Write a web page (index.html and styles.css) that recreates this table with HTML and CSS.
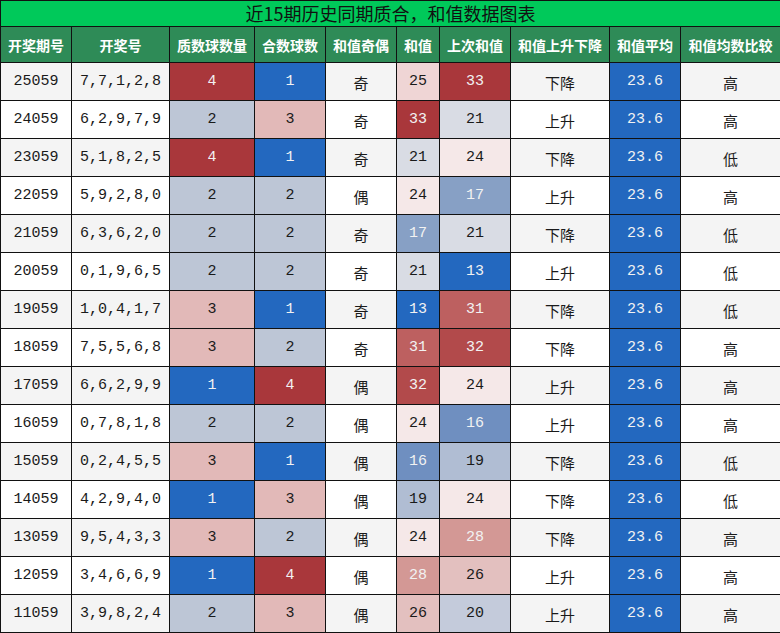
FILE: index.html
```html
<!DOCTYPE html>
<html lang="zh">
<head>
<meta charset="utf-8">
<title>近15期历史同期质合，和值数据图表</title>
<link rel="stylesheet" href="styles.css">
</head>
<body>
<table class="chart">
<colgroup>
<col class="c1"><col class="c2"><col class="c3"><col class="c4"><col class="c5"><col class="c6"><col class="c7"><col class="c8"><col class="c9"><col class="c10">
</colgroup>
<thead>
<tr class="title-row"><th colspan="10" class="title">近15期历史同期质合，和值数据图表</th></tr>
<tr class="head-row"><th>开奖期号</th><th>开奖号</th><th>质数球数量</th><th>合数球数</th><th>和值奇偶</th><th>和值</th><th>上次和值</th><th>和值上升下降</th><th>和值平均</th><th>和值均数比较</th></tr>
</thead>
<tbody>
<tr class="odd"><td>25059</td><td>7,7,1,2,8</td><td class="n4">4</td><td class="n1">1</td><td class="cjk">奇</td><td class="s25">25</td><td class="s33">33</td><td class="cjk">下降</td><td class="avg">23.6</td><td class="cjk">高</td></tr>
<tr class="even"><td>24059</td><td>6,2,9,7,9</td><td class="n2">2</td><td class="n3">3</td><td class="cjk">奇</td><td class="s33">33</td><td class="s21">21</td><td class="cjk">上升</td><td class="avg">23.6</td><td class="cjk">高</td></tr>
<tr class="odd"><td>23059</td><td>5,1,8,2,5</td><td class="n4">4</td><td class="n1">1</td><td class="cjk">奇</td><td class="s21">21</td><td class="s24">24</td><td class="cjk">下降</td><td class="avg">23.6</td><td class="cjk">低</td></tr>
<tr class="even"><td>22059</td><td>5,9,2,8,0</td><td class="n2">2</td><td class="n2">2</td><td class="cjk">偶</td><td class="s24">24</td><td class="s17">17</td><td class="cjk">上升</td><td class="avg">23.6</td><td class="cjk">高</td></tr>
<tr class="odd"><td>21059</td><td>6,3,6,2,0</td><td class="n2">2</td><td class="n2">2</td><td class="cjk">奇</td><td class="s17">17</td><td class="s21">21</td><td class="cjk">下降</td><td class="avg">23.6</td><td class="cjk">低</td></tr>
<tr class="even"><td>20059</td><td>0,1,9,6,5</td><td class="n2">2</td><td class="n2">2</td><td class="cjk">奇</td><td class="s21">21</td><td class="s13">13</td><td class="cjk">上升</td><td class="avg">23.6</td><td class="cjk">低</td></tr>
<tr class="odd"><td>19059</td><td>1,0,4,1,7</td><td class="n3">3</td><td class="n1">1</td><td class="cjk">奇</td><td class="s13">13</td><td class="s31">31</td><td class="cjk">下降</td><td class="avg">23.6</td><td class="cjk">低</td></tr>
<tr class="even"><td>18059</td><td>7,5,5,6,8</td><td class="n3">3</td><td class="n2">2</td><td class="cjk">奇</td><td class="s31">31</td><td class="s32">32</td><td class="cjk">下降</td><td class="avg">23.6</td><td class="cjk">高</td></tr>
<tr class="odd"><td>17059</td><td>6,6,2,9,9</td><td class="n1">1</td><td class="n4">4</td><td class="cjk">偶</td><td class="s32">32</td><td class="s24">24</td><td class="cjk">上升</td><td class="avg">23.6</td><td class="cjk">高</td></tr>
<tr class="even"><td>16059</td><td>0,7,8,1,8</td><td class="n2">2</td><td class="n2">2</td><td class="cjk">偶</td><td class="s24">24</td><td class="s16">16</td><td class="cjk">上升</td><td class="avg">23.6</td><td class="cjk">高</td></tr>
<tr class="odd"><td>15059</td><td>0,2,4,5,5</td><td class="n3">3</td><td class="n1">1</td><td class="cjk">偶</td><td class="s16">16</td><td class="s19">19</td><td class="cjk">下降</td><td class="avg">23.6</td><td class="cjk">低</td></tr>
<tr class="even"><td>14059</td><td>4,2,9,4,0</td><td class="n1">1</td><td class="n3">3</td><td class="cjk">偶</td><td class="s19">19</td><td class="s24">24</td><td class="cjk">下降</td><td class="avg">23.6</td><td class="cjk">低</td></tr>
<tr class="odd"><td>13059</td><td>9,5,4,3,3</td><td class="n3">3</td><td class="n2">2</td><td class="cjk">偶</td><td class="s24">24</td><td class="s28">28</td><td class="cjk">下降</td><td class="avg">23.6</td><td class="cjk">高</td></tr>
<tr class="even"><td>12059</td><td>3,4,6,6,9</td><td class="n1">1</td><td class="n4">4</td><td class="cjk">偶</td><td class="s28">28</td><td class="s26">26</td><td class="cjk">上升</td><td class="avg">23.6</td><td class="cjk">高</td></tr>
<tr class="odd"><td>11059</td><td>3,9,8,2,4</td><td class="n2">2</td><td class="n3">3</td><td class="cjk">偶</td><td class="s26">26</td><td class="s20">20</td><td class="cjk">上升</td><td class="avg">23.6</td><td class="cjk">高</td></tr>
</tbody>
</table>
</body>
</html>
```

FILE: styles.css
```css
html, body {
  margin: 0;
  padding: 0;
  background: #ffffff;
}

.chart {
  width: 780px;
  border-collapse: collapse;
  table-layout: fixed;
  font-family: "Liberation Mono", "Noto Sans CJK SC", monospace;
  font-size: 15px;
  line-height: 18px;
  color: #1a1a1a;
}

.c1 { width: 71px; }
.c2 { width: 98px; }
.c3 { width: 85px; }
.c4 { width: 71px; }
.c5 { width: 71px; }
.c6 { width: 43px; }
.c7 { width: 71px; }
.c8 { width: 99px; }
.c9 { width: 71px; }
.c10 { width: 100px; }

.chart th,
.chart td {
  border: 1px solid #111111;
  padding: 0;
  text-align: center;
  white-space: nowrap;
  overflow: hidden;
}

.title {
  height: 25px;
  background: #00c95a;
  color: #111111;
  font-family: "Noto Sans CJK SC", sans-serif;
  font-size: 18px;
  font-weight: normal;
  line-height: 25px;
}

.head-row th {
  height: 35px;
  background: #2e8b57;
  color: #ffffff;
  font-family: "Noto Sans CJK SC", sans-serif;
  font-size: 14px;
  line-height: 18px;
  font-weight: bold;
}

.chart tbody tr {
  height: 38px;
}

.chart td {
  height: 37px;
  box-sizing: border-box;
}

.odd td { background: #f4f4f4; }
.even td { background: #ffffff; }

.chart td.cjk {
  font-family: "Noto Sans CJK SC", sans-serif;
  padding-top: 3px;
}

/* count colours */
.chart td.n1 { background: #2368bf; color: #f2f2f2; }
.chart td.n2 { background: #bdc6d6; color: #1a1a1a; }
.chart td.n3 { background: #e2b9b8; color: #1a1a1a; }
.chart td.n4 { background: #a9373b; color: #f2f2f2; }

.chart td.avg { background: #2368bf; color: #f2f2f2; }

/* sum colours */
.chart td.s13 { background: #2368bf; color: #f2f2f2; }
.chart td.s16 { background: #6f8fc0; color: #f2f2f2; }
.chart td.s17 { background: #87a0c5; color: #f2f2f2; }
.chart td.s19 { background: #b0bdd3; color: #1a1a1a; }
.chart td.s20 { background: #c4cbdb; color: #1a1a1a; }
.chart td.s21 { background: #d9dce4; color: #1a1a1a; }
.chart td.s24 { background: #f5e8e8; color: #1a1a1a; }
.chart td.s25 { background: #efd5d5; color: #1a1a1a; }
.chart td.s26 { background: #e3c0bf; color: #1a1a1a; }
.chart td.s28 { background: #d39895; color: #f2f2f2; }
.chart td.s31 { background: #bd6060; color: #f2f2f2; }
.chart td.s32 { background: #b24a4b; color: #f2f2f2; }
.chart td.s33 { background: #a9373b; color: #f2f2f2; }
```
